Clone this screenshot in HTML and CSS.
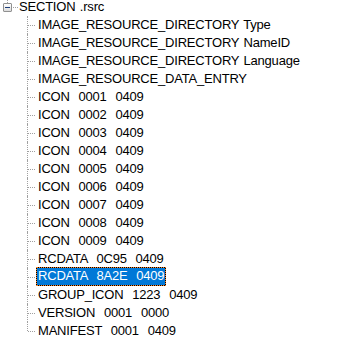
FILE: index.html
```html
<!DOCTYPE html>
<html lang="en">
  <head>
    <meta charset="UTF-8" />
    <title>Resource Tree</title>
    <link rel="stylesheet" href="styles.css">
  </head>
  <body>
    <ul class="tree">
      <li class="root">
        <div class="row">
          <span class="toggle"></span>
          <span class="label">SECTION .rsrc</span>
        </div>
        <ul class="children">
          <li><span class="label">IMAGE_RESOURCE_DIRECTORY Type</span></li>
          <li><span class="label">IMAGE_RESOURCE_DIRECTORY NameID</span></li>
          <li><span class="label">IMAGE_RESOURCE_DIRECTORY Language</span></li>
          <li><span class="label">IMAGE_RESOURCE_DATA_ENTRY</span></li>
          <li><span class="label">ICON  0001  0409</span></li>
          <li><span class="label">ICON  0002  0409</span></li>
          <li><span class="label">ICON  0003  0409</span></li>
          <li><span class="label">ICON  0004  0409</span></li>
          <li><span class="label">ICON  0005  0409</span></li>
          <li><span class="label">ICON  0006  0409</span></li>
          <li><span class="label">ICON  0007  0409</span></li>
          <li><span class="label">ICON  0008  0409</span></li>
          <li><span class="label">ICON  0009  0409</span></li>
          <li><span class="label">RCDATA  0C95  0409</span></li>
          <li><span class="label selected">RCDATA  8A2E  0409</span></li>
          <li><span class="label">GROUP_ICON  1223  0409</span></li>
          <li><span class="label">VERSION  0001  0000</span></li>
          <li><span class="label">MANIFEST  0001  0409</span></li>
        </ul>
      </li>
    </ul>
  </body>
</html>
```

FILE: styles.css
```css
body {
  margin: 0;
  background: #fff;
  overflow: hidden;
  font-family: "Liberation Sans", Arial, sans-serif;
  font-size: 13px;
  letter-spacing: -0.2px;
  word-spacing: 1px;
  color: #000;
}
.tree,
.children {
  list-style: none;
  margin: 0;
  padding: 0;
}
.tree {
  margin-top: -2px;
}
.row {
  display: flex;
  align-items: center;
  height: 18px;
  position: relative;
}
/* line from the parent above */
.row::before {
  content: "";
  position: absolute;
  left: 7px;
  top: 0;
  height: 5px;
  border-left: 1px dotted #a0a0a0;
}
.toggle {
  box-sizing: border-box;
  width: 9px;
  height: 9px;
  margin-left: 3px;
  border: 1px solid #919191;
  border-radius: 1px;
  background: linear-gradient(#fff, #dcdcdc);
  position: relative;
}
.toggle::before {
  content: "";
  position: absolute;
  left: 1px;
  top: 3px;
  width: 5px;
  height: 1px;
  background: #1c3e7a;
}
.toggle::after {
  content: "";
  width: 5px;
  margin-left: 9px;
  margin-top: 3px;
  display: block;
  border-top: 1px dotted #a0a0a0;
}
.row .label {
  margin-left: 5px;
}
.label {
  display: inline-block;
  height: 18px;
  line-height: 18px;
  padding: 0 2px;
  white-space: pre;
}
.children {
  margin-left: 27px;
}
.children li {
  position: relative;
  height: 18px;
  padding-left: 9px;
}
.children li::before {
  content: "";
  position: absolute;
  left: 0;
  top: 0;
  bottom: 0;
  border-left: 1px dotted #a0a0a0;
}
.children li:last-child::before {
  bottom: 9px;
}
.children li::after {
  content: "";
  position: absolute;
  left: 1px;
  top: 9px;
  width: 7px;
  border-top: 1px dotted #a0a0a0;
}
.selected {
  height: 19px;
  margin-top: -1px;
  background: #0078d7;
  color: #fff;
  outline: 1px dotted #ff8728;
  outline-offset: -1px;
  box-shadow: inset 0 0 0 1px #000;
}
```
